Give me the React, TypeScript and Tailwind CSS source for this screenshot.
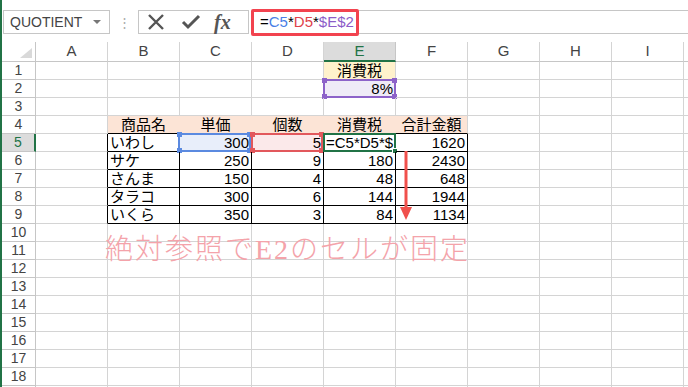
import React from 'react';

const COLS = ['A', 'B', 'C', 'D', 'E', 'F', 'G', 'H', 'I'];

type Cell = { v: string; align?: 'l' | 'r' | 'c' };

const TABLE: Record<number, string[]> = {
  5: ['いわし', '300', '5', '=C5*D5*$', '1620'],
  6: ['サケ', '250', '9', '180', '2430'],
  7: ['さんま', '150', '4', '48', '648'],
  8: ['タラコ', '300', '6', '144', '1944'],
  9: ['いくら', '350', '3', '84', '1134'],
};

const HEAD = ['商品名', '単価', '個数', '消費税', '合計金額'];

const Corners = ({ color }: { color: string }) => (
  <>
    <span className={`absolute -left-[3px] -top-[3px] w-[5px] h-[5px] ${color}`} />
    <span className={`absolute -right-[3px] -top-[3px] w-[5px] h-[5px] ${color}`} />
    <span className={`absolute -left-[3px] -bottom-[3px] w-[5px] h-[5px] ${color}`} />
    <span className={`absolute -right-[3px] -bottom-[3px] w-[5px] h-[5px] ${color}`} />
  </>
);

function cellFor(row: number, col: number): { cell?: Cell; cls: string; overlay?: React.ReactNode } {
  const colName = COLS[col];
  let cls = 'border-r border-b border-[#d4d4d4]';
  let cell: Cell | undefined;
  let overlay: React.ReactNode = null;

  if (colName === 'E' && row === 1) {
    cell = { v: '消費税', align: 'c' };
    cls = 'bg-[#fff2cc] border-r border-b border-[#d4d4d4]';
  }
  if (colName === 'E' && row === 2) {
    cell = { v: '8%', align: 'r' };
    cls = 'bg-[#efebf7] border-r border-b border-[#d4d4d4]';
    overlay = (
      <div className="absolute -left-[1px] -top-[1px] -right-[1px] -bottom-[1px] border-2 border-[#8d63c9]">
        <Corners color="bg-[#8d63c9]" />
      </div>
    );
  }
  if (row === 4 && col >= 1 && col <= 5) {
    cell = { v: HEAD[col - 1], align: 'c' };
    cls = col === 5 ? 'bg-[#fce4d6] border-r border-[#d4d4d4] border-b border-b-black' : 'bg-[#fce4d6] border-r border-r-[#fce4d6] border-b border-b-black';
  }
  if (TABLE[row]) {
    if (col === 0) cls = 'border-r border-r-black border-b border-b-[#d4d4d4]';
    if (col >= 1 && col <= 5) {
      cls = 'border-r border-b border-black';
      cell = { v: TABLE[row][col - 1], align: col === 1 || (row === 5 && col === 4) ? 'l' : 'r' };
      if (row === 5 && col === 2) {
        cls += ' bg-[#e8eefa]';
        overlay = (
          <div className="absolute -left-[2px] -top-[1px] right-0 -bottom-[1px] border-2 border-[#5b8ae0]">
            <Corners color="bg-[#5b8ae0]" />
          </div>
        );
      }
      if (row === 5 && col === 3) {
        cls += ' bg-[#fbe9ea]';
        overlay = (
          <div className="absolute -left-[1px] -top-[1px] right-0 -bottom-[1px] border-2 border-[#e2585c]">
            <Corners color="bg-[#e2585c]" />
          </div>
        );
      }
      if (row === 5 && col === 4) {
        overlay = (
          <div className="absolute -left-[1px] -top-[1px] -right-[1px] -bottom-[1px] border-2 border-[#217346]">
            <span className="absolute -right-[4px] -bottom-[4px] w-[6px] h-[6px] bg-[#217346] border border-white" />
          </div>
        );
      }
    }
  }
  return { cell, cls, overlay };
}

const FONT = { fontFamily: '"Liberation Sans", "Noto Sans CJK JP", sans-serif' };

export default function App() {
  const rows = Array.from({ length: 19 }, (_, i) => i + 1);
  return (
    <div className="relative w-[688px] h-[387px] overflow-hidden bg-white border-l-2 border-[#217346]" style={FONT}>
      {/* formula bar */}
      <div className="h-[42px] flex items-start pt-[10px]">
        <div className="ml-[1px] w-[107px] h-[24px] border border-[#c6c6c6] flex items-center justify-between pl-[6px] pr-[8px] text-[14px] text-[#444]">
          <span>QUOTIENT</span>
          <span className="w-0 h-0 border-l-[4px] border-r-[4px] border-t-[4px] border-l-transparent border-r-transparent border-t-[#777]" />
        </div>
        <div className="w-[28px] h-[24px] flex items-center justify-center text-[#aaa] text-[13px] leading-none">⋮</div>
        <div className="w-[111px] h-[24px] border border-[#c6c6c6] flex items-center">
          <svg width="20" height="16" viewBox="0 0 20 16" className="ml-[7px]">
            <path d="M3 1 L17 15 M17 1 L3 15" stroke="#555" strokeWidth="2.4" />
          </svg>
          <svg width="20" height="16" viewBox="0 0 20 16" className="ml-[15px]">
            <path d="M2 8 L7 13 L18 2" stroke="#555" strokeWidth="3" fill="none" />
          </svg>
          <span className="ml-[13px] text-[20px] italic font-bold text-[#555] leading-none" style={{ fontFamily: '"Liberation Serif", serif' }}>fx</span>
        </div>
        <div className="ml-[3px] flex-1 h-[24px] border-t border-b border-[#c6c6c6] relative">
          <div className="absolute -left-[1px] -top-[2px] w-[108px] h-[27px] border-[3px] border-[#f2434f] rounded-[2px] flex items-center pl-[6px] text-[15px]">
            <span className="text-black">=</span>
            <span className="text-[#4a7fe6]">C5</span>
            <span className="text-black">*</span>
            <span className="text-[#e0424a]">D5</span>
            <span className="text-black">*</span>
            <span className="text-[#8c5cc8]">$E$2</span>
          </div>
        </div>
      </div>

      {/* column headers */}
      <div className="flex h-[20px]">
        <div className="w-[34px] border-r border-b border-[#c6c6c6] relative">
          <svg width="12" height="10" viewBox="0 0 12 10" className="absolute right-[3px] bottom-[3px]">
            <path d="M12 0 L12 10 L0 10 Z" fill="#d9d9d9" />
          </svg>
        </div>
        {COLS.map(c => (
          <div
            key={c}
            className={`w-[72px] shrink-0 flex items-center justify-center text-[15px] border-r ${c === 'E' ? 'bg-[#dcdcdc] text-[#217346] border-r-[#c6c6c6] border-b-2 border-b-[#217346]' : 'text-[#444] border-[#d4d4d4] border-b border-b-[#c6c6c6]'}`}
          >
            {c}
          </div>
        ))}
        <div className="flex-1 border-b border-[#c6c6c6]" />
      </div>

      {/* rows */}
      {rows.map(r => (
        <div key={r} className="flex h-[18px]">
          <div
            className={`w-[34px] shrink-0 flex items-center justify-center text-[14px] border-b border-[#c6c6c6] ${r === 5 ? 'bg-[#dcdcdc] text-[#217346] border-r-2 border-r-[#217346]' : 'text-[#444] border-r border-r-[#c6c6c6]'}`}
          >
            {r < 19 ? r : ''}
          </div>
          {COLS.map((_, ci) => {
            const { cell, cls, overlay } = cellFor(r, ci);
            const align = cell?.align === 'r' ? 'justify-end pr-[2px]' : cell?.align === 'c' ? 'justify-center' : 'justify-start pl-[2px]';
            return (
              <div key={ci} className={`relative w-[72px] shrink-0 flex items-center text-[15px] text-black leading-none whitespace-nowrap ${align} ${cls}`}>
                {cell?.v}
                {overlay}
              </div>
            );
          })}
          <div className="flex-1 border-b border-[#d4d4d4]" />
        </div>
      ))}

      {/* red arrow annotation */}
      <svg width="16" height="72" viewBox="0 0 16 72" className="absolute left-[396px] top-[151px]">
        <path d="M8 0 L8 60" stroke="#f0504c" strokeWidth="3" />
        <path d="M2 56 L14 56 L8 69 Z" fill="#f0504c" />
      </svg>

      {/* caption */}
      <div
        className="absolute left-[103px] top-[236px] text-[28px] font-light leading-none tracking-[2px] text-[#f4a3aa] whitespace-nowrap"
        style={{ fontFamily: '"Liberation Serif", "Noto Sans CJK JP", serif' }}
      >
        絶対参照でE2のセルが固定
      </div>
    </div>
  );
}
